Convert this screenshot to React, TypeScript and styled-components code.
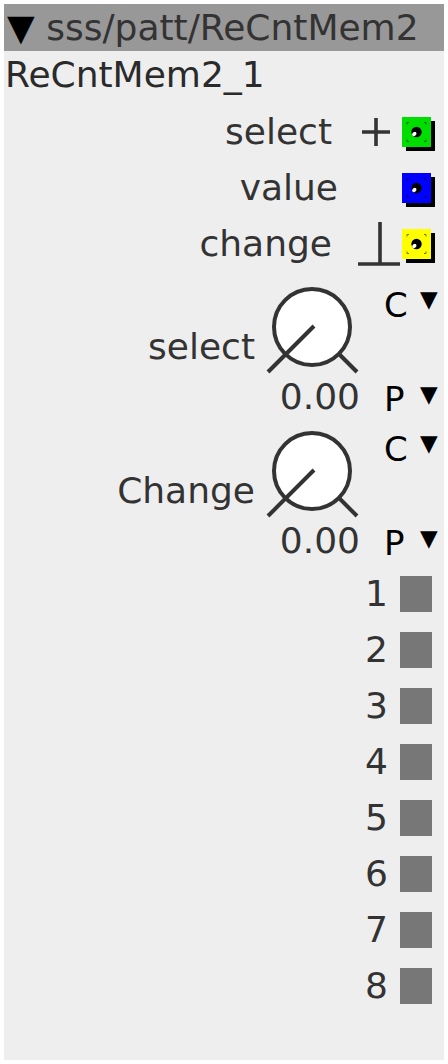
import React from "react";
import styled, { createGlobalStyle } from "styled-components";

const Global = createGlobalStyle`
  html, body { margin: 0; padding: 0; background: #ffffff; }
  body { font-family: "DejaVu Sans", "Liberation Sans", sans-serif; }
`;

const Panel = styled.div`
  margin: 4px;
  width: 440px;
  height: 1056px;
  background: #eeeeee;
  display: flex;
  flex-direction: column;
  font-family: "DejaVu Sans", sans-serif;
  font-size: 36px;
  color: #333333;
  overflow: hidden;
`;

const Header = styled.div`
  height: 47px;
  line-height: 47px;
  background: #989898;
  padding-left: 3px;
  white-space: nowrap;
  color: #333333;
`;

const Arrow = styled.span`
  color: #000000;
  font-size: 36px;
`;

const Title = styled.div`
  height: 53px;
  box-sizing: border-box;
  padding: 6px 0 0 1px;
  line-height: 36px;
  color: #2a2a2a;
`;

const InletRow = styled.div`
  height: 56px;
  display: flex;
  align-items: center;
  justify-content: flex-end;
  padding-right: 13px;
`;

const Label = styled.span`
  line-height: 36px;
  white-space: nowrap;
`;

const IconSlot = styled.div<{ $w: number; $pr: number }>`
  width: ${(p) => p.$w}px;
  height: 56px;
  display: flex;
  align-items: center;
  justify-content: flex-end;
  padding-right: ${(p) => p.$pr}px;
  box-sizing: border-box;
`;

const PortBox = styled.div<{ $c: string }>`
  width: 29px;
  height: 30px;
  background: ${(p) => p.$c};
  box-shadow: 4px 4px 0 #000000;
  display: flex;
`;

const KnobBlock = styled.div`
  height: 144px;
  box-sizing: border-box;
  padding: 11px 4px 0 0;
  display: flex;
  justify-content: flex-end;
`;

const KnobLabel = styled.span`
  line-height: 36px;
  margin-top: 46px;
  margin-right: 9px;
  white-space: nowrap;
`;

const KnobCol = styled.div`
  width: 96px;
  display: flex;
  flex-direction: column;
`;

const Value = styled.div`
  line-height: 36px;
  text-align: right;
  white-space: nowrap;
  margin-top: -1px;
`;

const SelCol = styled.div`
  width: 56px;
  margin-left: 24px;
  height: 133px;
  display: flex;
  flex-direction: column;
  justify-content: space-between;
`;

const Sel = styled.div<{ $top?: boolean }>`
  display: flex;
  align-items: flex-start;
  font-size: 34px;
  line-height: 36px;
  color: #000000;
  margin-top: ${(p) => (p.$top ? "4px" : "0")};
  margin-bottom: ${(p) => (p.$top ? "0" : "-1px")};
`;

const SelLetter = styled.span`
  width: 36px;
`;

const SelArrow = styled.span<{ $mt: number }>`
  font-size: 23px;
  line-height: 23px;
  margin-top: ${(p) => p.$mt}px;
`;

const Buttons = styled.div`
  padding-top: 6px;
  display: flex;
  flex-direction: column;
`;

const BtnRow = styled.div`
  height: 56px;
  display: flex;
  align-items: center;
  justify-content: flex-end;
  padding-right: 12px;
  gap: 12px;
`;

const Square = styled.div`
  width: 32px;
  height: 36px;
  background: #777777;
`;

const Port = ({ color }: { color: string }) => (
  <PortBox $c={color}>
    <svg width="29" height="30" viewBox="0 0 29 30">
      <g stroke="#000" strokeWidth="1" opacity="0.55" fill="none">
        <path d="M5 7.5 V5.5 H7" />
        <path d="M22 5.5 H24 V7.5" />
        <path d="M5 22.5 V24.5 H7" />
        <path d="M22 24.5 H24 V22.5" />
      </g>
      <circle cx="14.5" cy="15" r="5.2" fill="#000" />
      <ellipse cx="12.3" cy="17" rx="2.4" ry="1.8" fill="#fff" transform="rotate(-40 12.3 17)" />
    </svg>
  </PortBox>
);

const PlusIcon = () => (
  <svg width="28" height="30" viewBox="0 0 28 30">
    <path d="M14 1 V29 M0 15 H28" stroke="#333" strokeWidth="3.6" />
  </svg>
);

const TeeIcon = () => (
  <svg width="42" height="44" viewBox="0 0 42 44">
    <path d="M22 0 V42 M0 42 H42" stroke="#333" strokeWidth="3.6" />
  </svg>
);

const Knob = () => (
  <svg width="96" height="97" viewBox="0 0 96 97">
    <circle cx="48" cy="44" r="38" fill="#fff" stroke="#333" strokeWidth="4" />
    <path d="M50 43 L4 89" stroke="#333" strokeWidth="4" />
    <path d="M75 71 L93 89" stroke="#333" strokeWidth="4" />
  </svg>
);

const KnobSection = ({ label }: { label: string }) => (
  <KnobBlock>
    <KnobLabel>{label}</KnobLabel>
    <KnobCol>
      <Knob />
      <Value>0.00</Value>
    </KnobCol>
    <SelCol>
      <Sel $top>
        <SelLetter>C</SelLetter>
        <SelArrow $mt={1}>▼</SelArrow>
      </Sel>
      <Sel>
        <SelLetter>P</SelLetter>
        <SelArrow $mt={2}>▼</SelArrow>
      </Sel>
    </SelCol>
  </KnobBlock>
);

export default function App() {
  return (
    <>
      <Global />
      <Panel>
        <Header>
          <Arrow>▼</Arrow> sss/patt/ReCntMem2
        </Header>
        <Title>ReCntMem2_1</Title>
        <InletRow>
          <Label>select</Label>
          <IconSlot $w={70} $pr={12}>
            <PlusIcon />
          </IconSlot>
          <Port color="#00dd00" />
        </InletRow>
        <InletRow>
          <Label>value</Label>
          <IconSlot $w={64} $pr={12} />
          <Port color="#0000ff" />
        </InletRow>
        <InletRow>
          <Label>change</Label>
          <IconSlot $w={70} $pr={2}>
            <TeeIcon />
          </IconSlot>
          <Port color="#ffff00" />
        </InletRow>
        <KnobSection label="select" />
        <KnobSection label="Change" />
        <Buttons>
          {[1, 2, 3, 4, 5, 6, 7, 8].map((n) => (
            <BtnRow key={n}>
              <Label>{n}</Label>
              <Square />
            </BtnRow>
          ))}
        </Buttons>
      </Panel>
    </>
  );
}
